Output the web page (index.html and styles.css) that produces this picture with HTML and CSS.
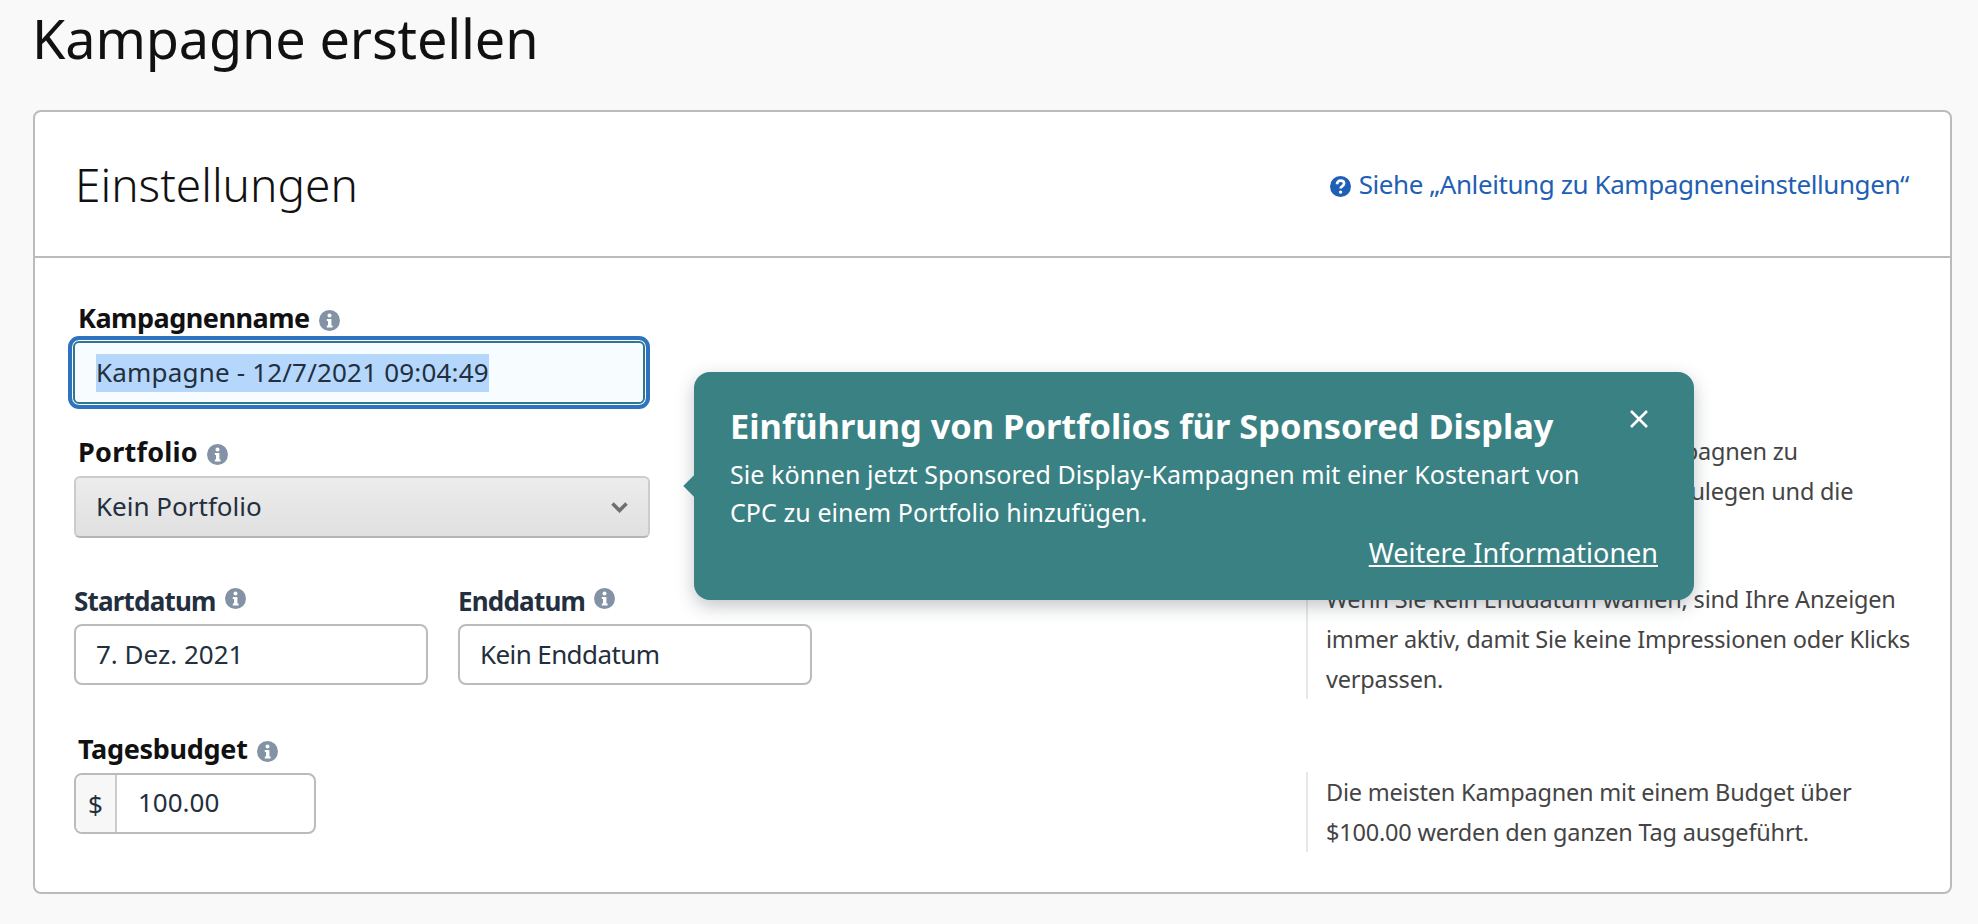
FILE: index.html
```html
<!DOCTYPE html>
<html lang="de">
<head>
<meta charset="utf-8">
<title>Kampagne erstellen</title>
<link rel="stylesheet" href="styles.css">
</head>
<body>
<svg class="defs" width="0" height="0" aria-hidden="true">
  <symbol id="info" viewBox="0 0 21 21">
    <circle cx="10.5" cy="10.5" r="10.5" fill="#8492a6"/>
    <circle cx="10.5" cy="5.6" r="2" fill="#fff"/>
    <path d="M7.8 9h4.6v6.4h1.2v2H7.8v-2H9v-4.4H7.8z" fill="#fff"/>
  </symbol>
</svg>
<main class="page">
  <h1 class="page-title">Kampagne erstellen</h1>
  <section class="card">
    <header class="card-header">
      <h2 class="card-title">Einstellungen</h2>
      <a class="guide-link" href="#">
        <svg class="guide-icon" viewBox="0 0 20 20" aria-hidden="true">
          <circle cx="10" cy="10" r="10" fill="#1f5fb5"/>
          <path d="M6.700 7.800c0-2 1.400-3.300 3.400-3.300 1.900 0 3.300 1.100 3.300 2.700 0 2.500-3.300 2.300-3.300 4.700" fill="none" stroke="#fff" stroke-width="2.600"/>
          <circle cx="10.100" cy="15.300" r="1.600" fill="#fff"/>
        </svg>
        <span>Siehe „Anleitung zu Kampagneneinstellungen“</span>
      </a>
    </header>
    <div class="card-body">
      <div class="row row-name">
        <div class="field">
          <label class="label label-dark label-name">Kampagnenname <svg class="info"><use href="#info"/></svg></label>
          <div class="input-focus"><span class="selected">Kampagne - 12/7/2021 09:04:49</span></div>
        </div>
      </div>
      <div class="row row-portfolio">
        <div class="field">
          <label class="label label-dark label-portfolio">Portfolio <svg class="info"><use href="#info"/></svg></label>
          <div class="select">
            <span>Kein Portfolio</span>
            <svg class="chevron" viewBox="0 0 17 11" aria-hidden="true"><path d="M1.500 1.500l7 7 7-7" fill="none" stroke="#6f6f6f" stroke-width="3.600"/></svg>
          </div>
        </div>
        <p class="help help-portfolio">Nutzen Sie ein Portfolio, um Kampagnen zu<br>gruppieren, Gesamtbudgets festzulegen und die<br>Leistung zu verfolgen.</p>
      </div>
      <div class="row row-dates">
        <div class="field date-fields">
          <div class="date-field">
            <label class="label label-date">Startdatum <svg class="info info-raised"><use href="#info"/></svg></label>
            <div class="input">7. Dez. 2021</div>
          </div>
          <div class="date-field">
            <label class="label label-date">Enddatum <svg class="info info-raised"><use href="#info"/></svg></label>
            <div class="input input-end">Kein Enddatum</div>
          </div>
        </div>
        <p class="help help-dates">Wenn Sie kein Enddatum wählen, sind Ihre Anzeigen<br>immer aktiv, damit Sie keine Impressionen oder Klicks<br>verpassen.</p>
      </div>
      <div class="row row-budget">
        <div class="field">
          <label class="label label-dark">Tagesbudget <svg class="info"><use href="#info"/></svg></label>
          <div class="budget"><span class="currency">$</span><span class="amount">100.00</span></div>
        </div>
        <p class="help help-budget">Die meisten Kampagnen mit einem Budget über<br>$100.00 werden den ganzen Tag ausgeführt.</p>
      </div>
      <aside class="popover">
        <svg class="popover-close" viewBox="0 0 20 20" aria-hidden="true"><path d="M2 2l16 16M18 2L2 18" stroke="#fff" stroke-width="2.600" fill="none"/></svg>
        <h3 class="popover-title">Einführung von Portfolios für Sponsored Display</h3>
        <p class="popover-text">Sie können jetzt Sponsored Display-Kampagnen mit einer Kostenart von<br>CPC zu einem Portfolio hinzufügen.</p>
        <div class="popover-foot"><a class="popover-link" href="#">Weitere Informationen</a></div>
      </aside>
    </div>
  </section>
</main>
</body>
</html>
```
FILE: styles.css
```css
* { box-sizing: border-box; }
html, body { margin: 0; padding: 0; }
body {
  background: #f9f9f9;
  color: #232f3e;
  font-family: "Noto Sans", "Liberation Sans", sans-serif;
  font-size: 26px;
  height: 924px;
  overflow: hidden;
}
.defs { position: absolute; }
.page { padding: 0 26px 0 33px; }
.page-title {
  margin: 0 0 0 -1px;
  height: 110px;
  padding: 0;
  font-size: 54px;
  line-height: 76px;
  font-weight: 400;
  letter-spacing: -.15px;
  color: #111;
}
.card {
  width: 1919px;
  height: 784px;
  background: #fff;
  border: 2px solid #bbb;
  border-radius: 8px;
}
.card-header {
  height: 146px;
  border-bottom: 2px solid #bbb;
  display: flex;
  align-items: center;
  justify-content: space-between;
  padding: 0 41px 0 40px;
}
.card-title {
  margin: 0;
  font-size: 46px;
  font-weight: 300;
  color: #111;
}
.guide-link {
  display: flex;
  align-items: center;
  gap: 8px;
  color: #1f5fb5;
  text-decoration: none;
  letter-spacing: -.41px;
}
.guide-icon { width: 21px; height: 21px; margin-top: 4px; }
.card-body {
  position: relative;
  padding: 43px 0 0 39px;
}
.row {
  display: flex;
  justify-content: space-between;
  align-items: flex-start;
}
.row-portfolio { margin-top: 26px; }
.row-dates { margin-top: 46px; }
.row-budget { margin-top: 47px; }
.field { flex: none; }
.label {
  display: flex;
  align-items: center;
  gap: 9px;
  height: 34px;
  font-weight: 700;
  line-height: 34px;
}
.label-dark {
  color: #111;
  margin-left: 4px;
  font-size: 27px;
  letter-spacing: -.3px;
}
.label-name { letter-spacing: -.5px; }
.label-portfolio { letter-spacing: .25px; }
.label-date {
  color: #232f3e;
  font-size: 26px;
  letter-spacing: -.8px;
}
.info { width: 21px; height: 21px; margin-top: 5px; }
.info-raised { margin-top: -5px; }
.input-focus {
  width: 582px;
  height: 73px;
  margin: 1px 0 0 -6px;
  padding-left: 24px;
  display: flex;
  align-items: center;
  background: #f6fcff;
  border: 4px solid #2e73bf;
  border-radius: 11px;
  box-shadow: inset 0 0 0 1px #fff, inset 0 0 0 3px #2b7890, inset 0 0 0 4px #fff;
}
.selected {
  display: block;
  height: 38px;
  background: #b5d7fb;
  line-height: 36px;
  letter-spacing: .18px;
}
.select {
  width: 576px;
  height: 62px;
  margin-top: 7px;
  padding: 0 20px 2px 20px;
  display: flex;
  align-items: center;
  justify-content: space-between;
  background: linear-gradient(#ececec, #e0e0e0);
  border: 2px solid #ccc;
  border-bottom-color: #b5b5b5;
  border-radius: 6px;
}
.chevron { width: 17px; height: 11px; margin-top: 2px; }
.date-fields { display: flex; gap: 30px; }
.date-field { width: 354px; }
.input {
  height: 61px;
  margin-top: 6px;
  padding: 0 0 2px 20px;
  display: flex;
  align-items: center;
  background: #fff;
  border: 2px solid #bbb;
  border-radius: 8px;
}
.input-end { letter-spacing: -.6px; }
.budget {
  width: 242px;
  height: 61px;
  margin-top: 7px;
  display: flex;
  background: #fff;
  border: 2px solid #bbb;
  border-radius: 8px;
  overflow: hidden;
}
.currency {
  width: 41px;
  display: flex;
  align-items: center;
  justify-content: center;
  background: #f7f7f7;
  border-right: 2px solid #ccc;
}
.amount {
  padding: 0 0 3px 21px;
  display: flex;
  align-items: center;
}
.help {
  margin: 0 40px 0 0;
  width: 604px;
  padding-left: 18px;
  border-left: 2px solid #e7e7e7;
  color: #444;
  font-size: 23.500px;
  letter-spacing: -.2px;
  line-height: 40px;
  white-space: nowrap;
}
.help-portfolio { margin-top: -4px; margin-bottom: -14px; }
.help-dates { margin-top: -5px; margin-bottom: -15px; }
.help-budget { margin-top: 40px; }
.popover {
  position: absolute;
  left: 659px;
  top: 114px;
  width: 1000px;
  height: 228px;
  padding: 31px 29px 0 36px;
  background: #3a8184;
  border-radius: 16px;
  color: #fff;
  box-shadow: 0 6px 18px rgba(35, 47, 62, .28);
}
.popover::before {
  content: "";
  position: absolute;
  left: -9px;
  top: 101px;
  width: 26px;
  height: 26px;
  background: #3a8184;
  transform: rotate(45deg) scale(.8);
}
.popover-close {
  position: absolute;
  right: 45px;
  top: 37px;
  width: 20px;
  height: 20px;
}
.popover-title {
  position: relative;
  margin: 0;
  font-size: 34.400px;
  line-height: 46px;
  font-weight: 700;
}
.popover-text {
  position: relative;
  margin: 7px 0 0;
  font-size: 25px;
  letter-spacing: .07px;
  line-height: 37.500px;
  white-space: nowrap;
}
.popover-foot {
  position: relative;
  margin-top: 2px;
  text-align: right;
  padding-right: 7px;
}
.popover-link { color: #fff; font-size: 27px; line-height: 40px; }
```
